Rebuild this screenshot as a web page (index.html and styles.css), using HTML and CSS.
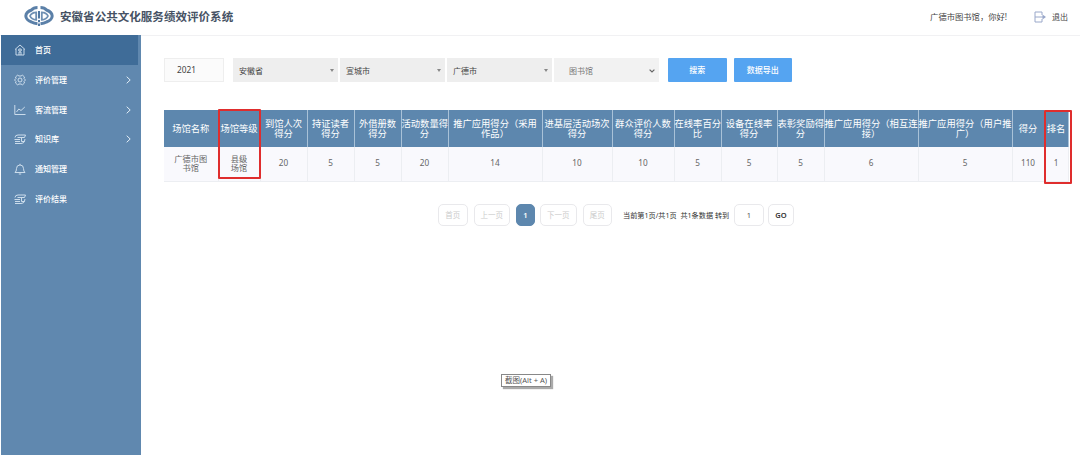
FILE: index.html
```html
<!DOCTYPE html>
<html lang="zh-CN">
<head>
    <meta charset="UTF-8">
    <meta name="viewport" content="width=device-width, initial-scale=1.0">
    <title>安徽省公共文化服务绩效评价系统</title>
    <link rel="stylesheet" href="styles.css">
</head>
<body>
    <div class="header">
        <svg class="logo" viewBox="0 0 30 20">
            <path d="M13.500 1.500 Q9.500 1.500 7.500 4 Q2 6 1.800 10 Q2 14 7.500 16 Q10 17.500 13.500 17.800 M16.500 1.500 Q20.500 1.500 22.500 4 Q28 6 28.200 10 Q28 14 22.500 16 Q20 17.500 16.500 17.800" fill="none" stroke="#5b80a8" stroke-width="3"/>
            <path d="M12.200 5.500 V13.800 Q7.500 13.500 6 10 Q7.500 6.500 12 6.300 M17.800 5.500 V13.800 Q22.500 13.500 24 10 Q22.500 6.500 18 6.300" fill="none" stroke="#6f90b3" stroke-width="1.800"/>
            <path d="M15 5 V12.500 M15 14 V16.300 M15 17.500 V20" stroke="#5279a3" stroke-width="2"/>
        </svg>
        <h1>安徽省公共文化服务绩效评价系统</h1>
        <span class="hello">广德市图书馆，你好!</span>
        <a href="#" class="logout">
            <svg viewBox="0 0 12 12"><path d="M8 4 V1 H1 V11 H8 V8 M1 6 H10.500"/><path class="head" d="M8.500 3.500 L12 6 L8.500 8.500Z"/></svg>
            <span>退出</span>
        </a>
    </div>
    <div class="main">
        <ul class="menu">
            <li class="active">
                <svg class="icon" viewBox="0 0 12 12"><path d="M1 5.500 L6 1 L11 5.500 M2 5 V11 H10 V5 M5 11 V8 H7 V11 M4.800 5 H7.200 V7 H4.800Z"/></svg>
                <a href="#">首页</a>
            </li>
            <li>
                <svg class="icon" viewBox="0 0 12 12"><path d="M3.500 1.200 L5 2 H7 L8.500 1.200 L10.500 3 L10 4.500 L11.500 6 L10 7.500 L10.500 9 L8.500 10.800 L7 10 H5 L3.500 10.800 L1.500 9 L2 7.500 L.5 6 L2 4.500 L1.500 3Z"/><circle cx="6" cy="6" r="2"/></svg>
                <a href="#">评价管理</a>
                <svg class="arrow" viewBox="0 0 5 8"><path d="M.7 .7 L4.200 4 L.7 7.300"/></svg>
            </li>
            <li>
                <svg class="icon" viewBox="0 0 12 12"><path d="M.8 1 V10.500 H11.500 M2.500 8 L4.800 5 L7 6.500 L10.800 3"/></svg>
                <a href="#">客流管理</a>
                <svg class="arrow" viewBox="0 0 5 8"><path d="M.7 .7 L4.200 4 L.7 7.300"/></svg>
            </li>
            <li>
                <svg class="icon" viewBox="0 0 12 12"><path d="M1 4.500 Q1.200 2 4 2 H11.500 L10.500 4.500 H3.500 M.5 6.500 H6 M1 8.500 H6 M11 6 L10.500 8 Q10 10.500 7 10.500 H1 M7.500 5 V8.500 H10.500"/></svg>
                <a href="#">知识库</a>
                <svg class="arrow" viewBox="0 0 5 8"><path d="M.7 .7 L4.200 4 L.7 7.300"/></svg>
            </li>
            <li>
                <svg class="icon" viewBox="0 0 12 12"><path d="M1 9.500 Q2.500 8.500 2.500 5.500 Q2.500 2 6 2 Q9.500 2 9.500 5.500 Q9.500 8.500 11 9.500Z M6 .8 V2 M4.800 11 H7.200"/></svg>
                <a href="#">通知管理</a>
            </li>
            <li>
                <svg class="icon" viewBox="0 0 12 12"><path d="M1 4.500 Q1.200 2 4 2 H11.500 L10.500 4.500 H3.500 M.5 6.500 H6 M1 8.500 H6 M11 6 L10.500 8 Q10 10.500 7 10.500 H1 M7.500 5 V8.500 H10.500"/></svg>
                <a href="#">评价结果</a>
            </li>
        </ul>
        <div class="content">
            <div class="search">
                <div class="year">2021</div>
                <div class="select">安徽省<i></i></div>
                <div class="select">宣城市<i></i></div>
                <div class="select">广德市<i></i></div>
                <div class="select type">图书馆<svg viewBox="0 0 6 4"><path d="M.6 .6 L3 3 L5.400 .6"/></svg></div>
                <button class="btn">搜索</button>
                <button class="btn">数据导出</button>
            </div>
            <div class="table-box">
                <table>
                    <colgroup>
                        <col class="w54"><col class="w42"><col class="w47"><col class="w47"><col class="w47"><col class="w47">
                        <col class="w94"><col class="w70"><col class="w62"><col class="w47"><col class="w56"><col class="w47">
                        <col class="w94"><col class="w94"><col class="w32"><col class="w24">
                    </colgroup>
                    <tr>
                        <th>场馆名称</th>
                        <th>场馆等级</th>
                        <th>到馆人次<br>得分</th>
                        <th>持证读者<br>得分</th>
                        <th>外借册数<br>得分</th>
                        <th>活动数量得<br>分</th>
                        <th>推广应用得分（采用<br>作品）</th>
                        <th>进基层活动场次<br>得分</th>
                        <th>群众评价人数<br>得分</th>
                        <th>在线率百分<br>比</th>
                        <th>设备在线率<br>得分</th>
                        <th>表彰奖励得<br>分</th>
                        <th>推广应用得分（相互连<br>接）</th>
                        <th>推广应用得分（用户推<br>广）</th>
                        <th>得分</th>
                        <th>排名</th>
                    </tr>
                    <tr>
                        <td>广德市图<br>书馆</td>
                        <td>县级<br>场馆</td>
                        <td>20</td>
                        <td>5</td>
                        <td>5</td>
                        <td>20</td>
                        <td>14</td>
                        <td>10</td>
                        <td>10</td>
                        <td>5</td>
                        <td>5</td>
                        <td>5</td>
                        <td>6</td>
                        <td>5</td>
                        <td>110</td>
                        <td>1</td>
                    </tr>
                </table>
                <div class="mark mark-level"></div>
                <div class="mark mark-rank"></div>
            </div>
            <div class="page">
                <a href="#" class="w29">首页</a>
                <a href="#" class="w36">上一页</a>
                <a href="#" class="cur">1</a>
                <a href="#" class="w36">下一页</a>
                <a href="#" class="w29">尾页</a>
                <p>当前第1页/共1页&nbsp; 共1条数据 转到</p>
                <span class="num">1</span>
                <a href="#" class="go">GO</a>
            </div>
        </div>
    </div>
    <div class="tip">截图(Alt + A)</div>
</body>
</html>
```
FILE: styles.css
```css
* { box-sizing: border-box; }
body { margin: 0; height: 455px; overflow: hidden; background: #fff; color: #444; font: 8px/10px "Noto Sans", "Noto Sans CJK SC", sans-serif; white-space: nowrap; }
a { color: inherit; text-decoration: none; }
ul, p, h1 { margin: 0; padding: 0; list-style: none; }

/* 头部 */
.header { display: flex; align-items: center; height: 36px; padding: 0 12px 2px 24px; border-bottom: 1px solid #f1f1f3; }
.logo { width: 30px; height: 20px; margin: -1px 6px 0 0; }
h1 { color: #465264; font-size: 11.55px; line-height: 16px; font-weight: 600; }
.hello { margin-left: auto; font-size: 8.3px; }
.logout { display: flex; align-items: center; margin-left: 27px; }
.logout svg { width: 12px; height: 12px; margin-right: 6px; fill: none; stroke: #9aa8ca; stroke-width: 1; }
.logout .head { fill: #9aa8ca; stroke: none; }

/* 左侧菜单 */
.main { display: flex; height: 419px; }
.menu { width: 140px; margin: -1px 0 0 1px; background: #6088af; color: #fff; }
.menu li { display: flex; align-items: center; height: 29.8px; padding: 0 10px 0 13px; font-weight: 500; }
.menu .active { width: 137px; height: 30px; background: #3f6c98; }
.icon { width: 12px; height: 12px; margin-right: 9px; fill: none; stroke: #d7e5f2; stroke-width: .9; }
.arrow { width: 5px; height: 8px; margin-left: auto; fill: none; stroke: #e3edf6; stroke-width: 1; }

/* 查询条件 */
.content { padding: 22px 0 0 23px; }
.search { display: flex; height: 24px; line-height: 24px; }
.year { width: 60px; margin-right: 9px; padding-left: 12px; border: 1px solid #eee; background: #fbfbfb; font-size: 8.3px; line-height: 22px; }
.select { display: flex; align-items: center; justify-content: space-between; width: 105px; margin-right: 2px; padding: 1px 4px 0 6px; background: #eee; }
.select i { border: 2.5px solid transparent; border-top: 3.5px solid #888; border-bottom: 0; }
.type { margin: 0 9px 0 0; padding-left: 15px; background: #f2f2f2; color: #777; }
.type svg { width: 6px; height: 4px; fill: none; stroke: #666; stroke-width: 1.2; }
.btn { width: 58.5px; height: 24px; margin-right: 7px; padding: 0; border: 0; border-radius: 1px; background: #55a4f1; color: #fff; font: 500 8px/24px "Noto Sans", "Noto Sans CJK SC", sans-serif; }

/* 表格 */
.table-box { position: relative; width: 904px; margin-top: 28px; }
table { width: 904px; border-collapse: collapse; table-layout: fixed; }
th, td { padding: 0; text-align: center; overflow: visible; }
th { height: 37px; border-right: 1px solid #a9c2d8; background: #5d87ae; color: #fff; font-size: 9.3px; line-height: 10px; font-weight: 400; }
td { height: 34px; padding-bottom: 2px; border: solid #eceef2; border-width: 0 1px 1px 0; background: #f9f9fd; color: #666; font-size: 8.2px; line-height: 9px; }
th:nth-child(-n+2) { border-right-color: #5d87ae; }
.w54 { width: 54px; }
.w42 { width: 42px; }
.w47 { width: 47px; }
.w94 { width: 94px; }
.w70 { width: 70px; }
.w62 { width: 62px; }
.w56 { width: 56px; }
.w32 { width: 32px; }
.w24 { width: 24px; }
/* 红框标注 */
.mark { position: absolute; border: 2px solid #df2d2d; border-radius: 1px; }
.mark-level { left: 54px; top: -1px; width: 43px; height: 70px; }
.mark-rank { left: 880px; top: 0; width: 28px; height: 74px; }

/* 分页 */
.page { display: flex; align-items: center; height: 22px; margin: 22px 0 0 274px; }
.page a, .num { flex: none; height: 22px; margin-right: 6px; border: 1px solid #e9e9ec; border-radius: 5px; color: #ccc; font-size: 7.5px; line-height: 20px; text-align: center; }
.page .w29 { width: 29.5px; }
.page .w36 { width: 36.5px; }
.page .cur { width: 19px; margin-right: 5px; border-color: #5d87ae; background: #5d87ae; color: #fff; font-weight: 600; }
.page p { width: 106px; margin: 0 5px 0 5px; font-size: 7.15px; color: #333; }
.page .num { width: 30px; margin-right: 4px; color: #555; }
.page .go { width: 26px; color: #333; font-weight: 600; }

.tip { position: absolute; left: 501px; top: 374px; width: 50px; height: 13px; border: 1px solid #888; background: #fff; box-shadow: 2px 2px 1px #aaa; color: #555; font-size: 7.5px; line-height: 11px; text-align: center; }
```
